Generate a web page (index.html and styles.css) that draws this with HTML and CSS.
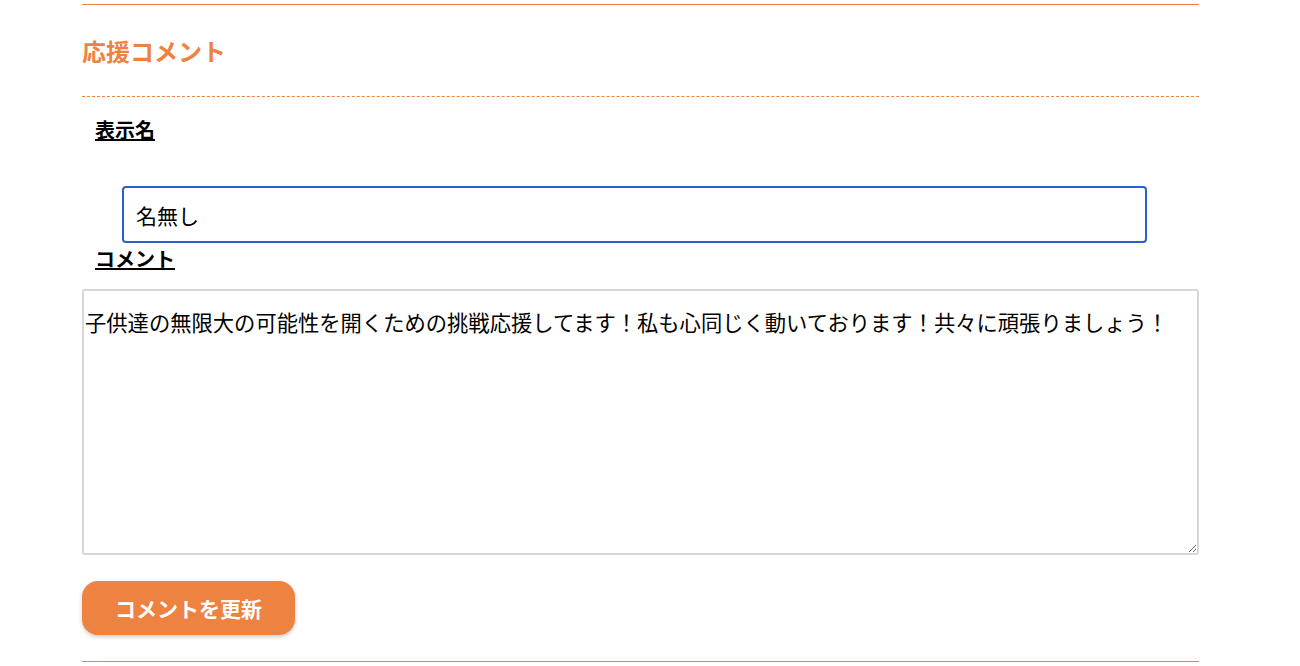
FILE: index.html
```html
<!DOCTYPE html>
<html lang="ja">
<head>
    <meta charset="UTF-8">
    <meta name="viewport" content="width=device-width, initial-scale=1.0">
    <title>応援コメント</title>
    <link rel="stylesheet" href="styles.css">
</head>
<body>

    <section class="comment-box">
        <h2 class="comment-title">応援コメント</h2>

        <form class="comment-form">
            <label class="field-label" for="name">表示名</label>
            <input class="name-input" id="name" type="text" value="名無し">

            <label class="field-label label-comment" for="comment">コメント</label>
            <textarea class="comment-text" id="comment">子供達の無限大の可能性を開くための挑戦応援してます！私も心同じく動いております！共々に頑張りましょう！</textarea>

            <div class="form-actions">
                <button class="submit-button" type="button">コメントを更新</button>
            </div>
        </form>
    </section>

</body>
</html>
```

FILE: styles.css
```css
body {
    font-family: "Noto Sans CJK JP", "Noto Sans", sans-serif;
    background-color: #ffffff;
    margin: 0;
    padding: 4px 0 0 0;
    color: #000;
}

.comment-box {
    width: 1117px;
    margin-left: 82px;
    border-top: 1px solid #ee8240;
    border-bottom: 1px solid #ee8240;
}

.comment-title {
    margin: 0;
    padding: 30px 0 29px;
    font-size: 24px;
    line-height: 32px;
    font-weight: bold;
    color: #ee8240;
    border-bottom: 1px dashed #ee8240;
}

.comment-form {
    display: flex;
    flex-direction: column;
    align-items: flex-start;
    padding-bottom: 26px;
}

.field-label {
    display: block;
    margin: 21px 0 0 13px;
    font-size: 20px;
    line-height: 24px;
    font-weight: bold;
    text-decoration: underline;
}

.label-comment {
    margin-top: 4px;
}

.name-input {
    box-sizing: border-box;
    width: 1025px;
    height: 57px;
    margin: 44px 0 0 40px;
    padding: 0 12px;
    border: 2px solid #2b5fcc;
    border-radius: 4px;
    outline: none;
    font-family: inherit;
    font-size: 21px;
    color: #000;
}

.comment-text {
    box-sizing: border-box;
    width: 1117px;
    height: 266px;
    margin-top: 18px;
    padding: 15px 1px 0;
    border: 2px solid #d6d6d6;
    border-radius: 3px;
    font-family: inherit;
    font-size: 21.3px;
    line-height: 32px;
    color: #000;
}

.form-actions {
    margin-top: 26px;
}

.submit-button {
    width: 213px;
    height: 54px;
    padding: 0;
    background-color: #ee8240;
    color: #ffffff;
    border: none;
    border-radius: 16px;
    box-shadow: 0 2px 4px rgba(0, 0, 0, 0.2);
    font-family: inherit;
    font-size: 21px;
    font-weight: bold;
    cursor: pointer;
}
```
